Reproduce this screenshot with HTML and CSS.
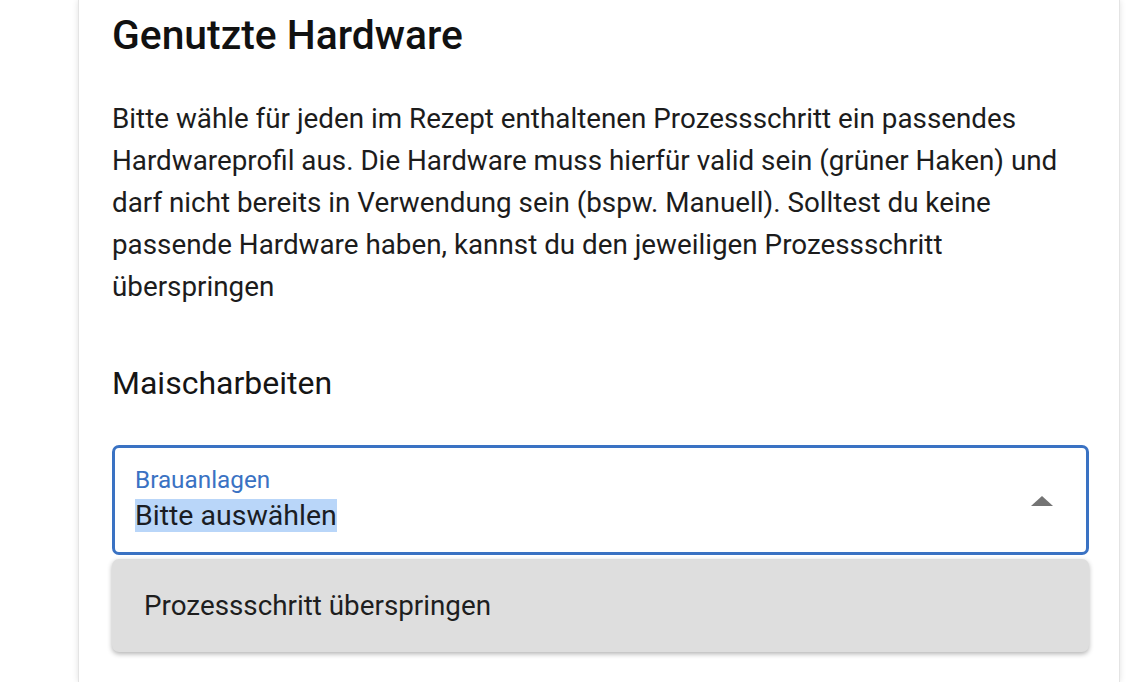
FILE: index.html
```html
<!DOCTYPE html>
<html lang="de">
<head>
    <meta charset="UTF-8">
    <meta name="viewport" content="width=device-width, initial-scale=1.0">
    <title>Genutzte Hardware</title>
    <link rel="stylesheet" href="styles.css">
</head>
<body>
    <div class="card">
        <h2 class="title">Genutzte Hardware</h2>

        <p class="hint">
            Bitte wähle für jeden im Rezept enthaltenen Prozessschritt ein passendes
            Hardwareprofil aus. Die Hardware muss hierfür valid sein (grüner Haken) und
            darf nicht bereits in Verwendung sein (bspw. Manuell). Solltest du keine
            passende Hardware haben, kannst du den jeweiligen Prozessschritt
            überspringen
        </p>

        <h3 class="step">Maischarbeiten</h3>

        <div class="select">
            <div class="select-text">
                <div class="select-label">Brauanlagen</div>
                <div class="select-value"><span class="marked">Bitte auswählen</span></div>
            </div>
            <div class="arrow"></div>
        </div>

        <div class="menu">
            <div class="menu-item">Prozessschritt überspringen</div>
        </div>
    </div>
</body>
</html>
```

FILE: styles.css
```css
html, body {
    margin: 0;
    background: #fff;
    height: 100%;
    overflow: hidden;
}

body {
    font-family: Roboto, "Noto Sans", Arial, sans-serif;
    color: #1c1c1c;
}

.card {
    margin-left: 78px;
    width: 1042px;
    min-height: 100%;
    box-sizing: border-box;
    padding: 0 30px 0 33px;
    background: #fff;
    border-left: 1px solid #e4e4e4;
    border-right: 1px solid #e4e4e4;
    box-shadow: 0 0 6px rgba(0, 0, 0, 0.12);
}

.title {
    margin: 0;
    padding-top: 13px;
    font-size: 40.8px;
    line-height: 44px;
    font-weight: 500;
    color: #111;
}

.hint {
    margin: 41px 0 0;
    font-size: 27.8px;
    line-height: 42px;
    color: #1c1c1c;
}

.step {
    margin: 55px 0 0;
    font-size: 32px;
    line-height: 40px;
    font-weight: 400;
    color: #151515;
}

.select {
    margin-top: 42px;
    height: 110px;
    box-sizing: border-box;
    border: 3px solid #3a72c3;
    border-radius: 7px;
    padding: 0 33px 0 20px;
    display: flex;
    align-items: center;
    justify-content: space-between;
}

.select-label {
    font-size: 24.3px;
    line-height: 28px;
    color: #3a72c3;
}

.select-value {
    font-size: 28.5px;
    line-height: 36px;
    margin-top: 4px;
    color: #1a1d24;
}

.marked {
    background: #b9d6f9;
}

.arrow {
    width: 0;
    height: 0;
    border-left: 11px solid transparent;
    border-right: 11px solid transparent;
    border-bottom: 10px solid #747474;
    margin-top: 2px;
}

.menu {
    margin-top: 4px;
    background: #dedede;
    border-radius: 7px;
    box-shadow: 0 2px 5px rgba(0, 0, 0, 0.3);
}

.menu-item {
    padding: 0 32px;
    height: 93px;
    display: flex;
    align-items: center;
    font-size: 27.8px;
    color: #1e1e1e;
}
```
